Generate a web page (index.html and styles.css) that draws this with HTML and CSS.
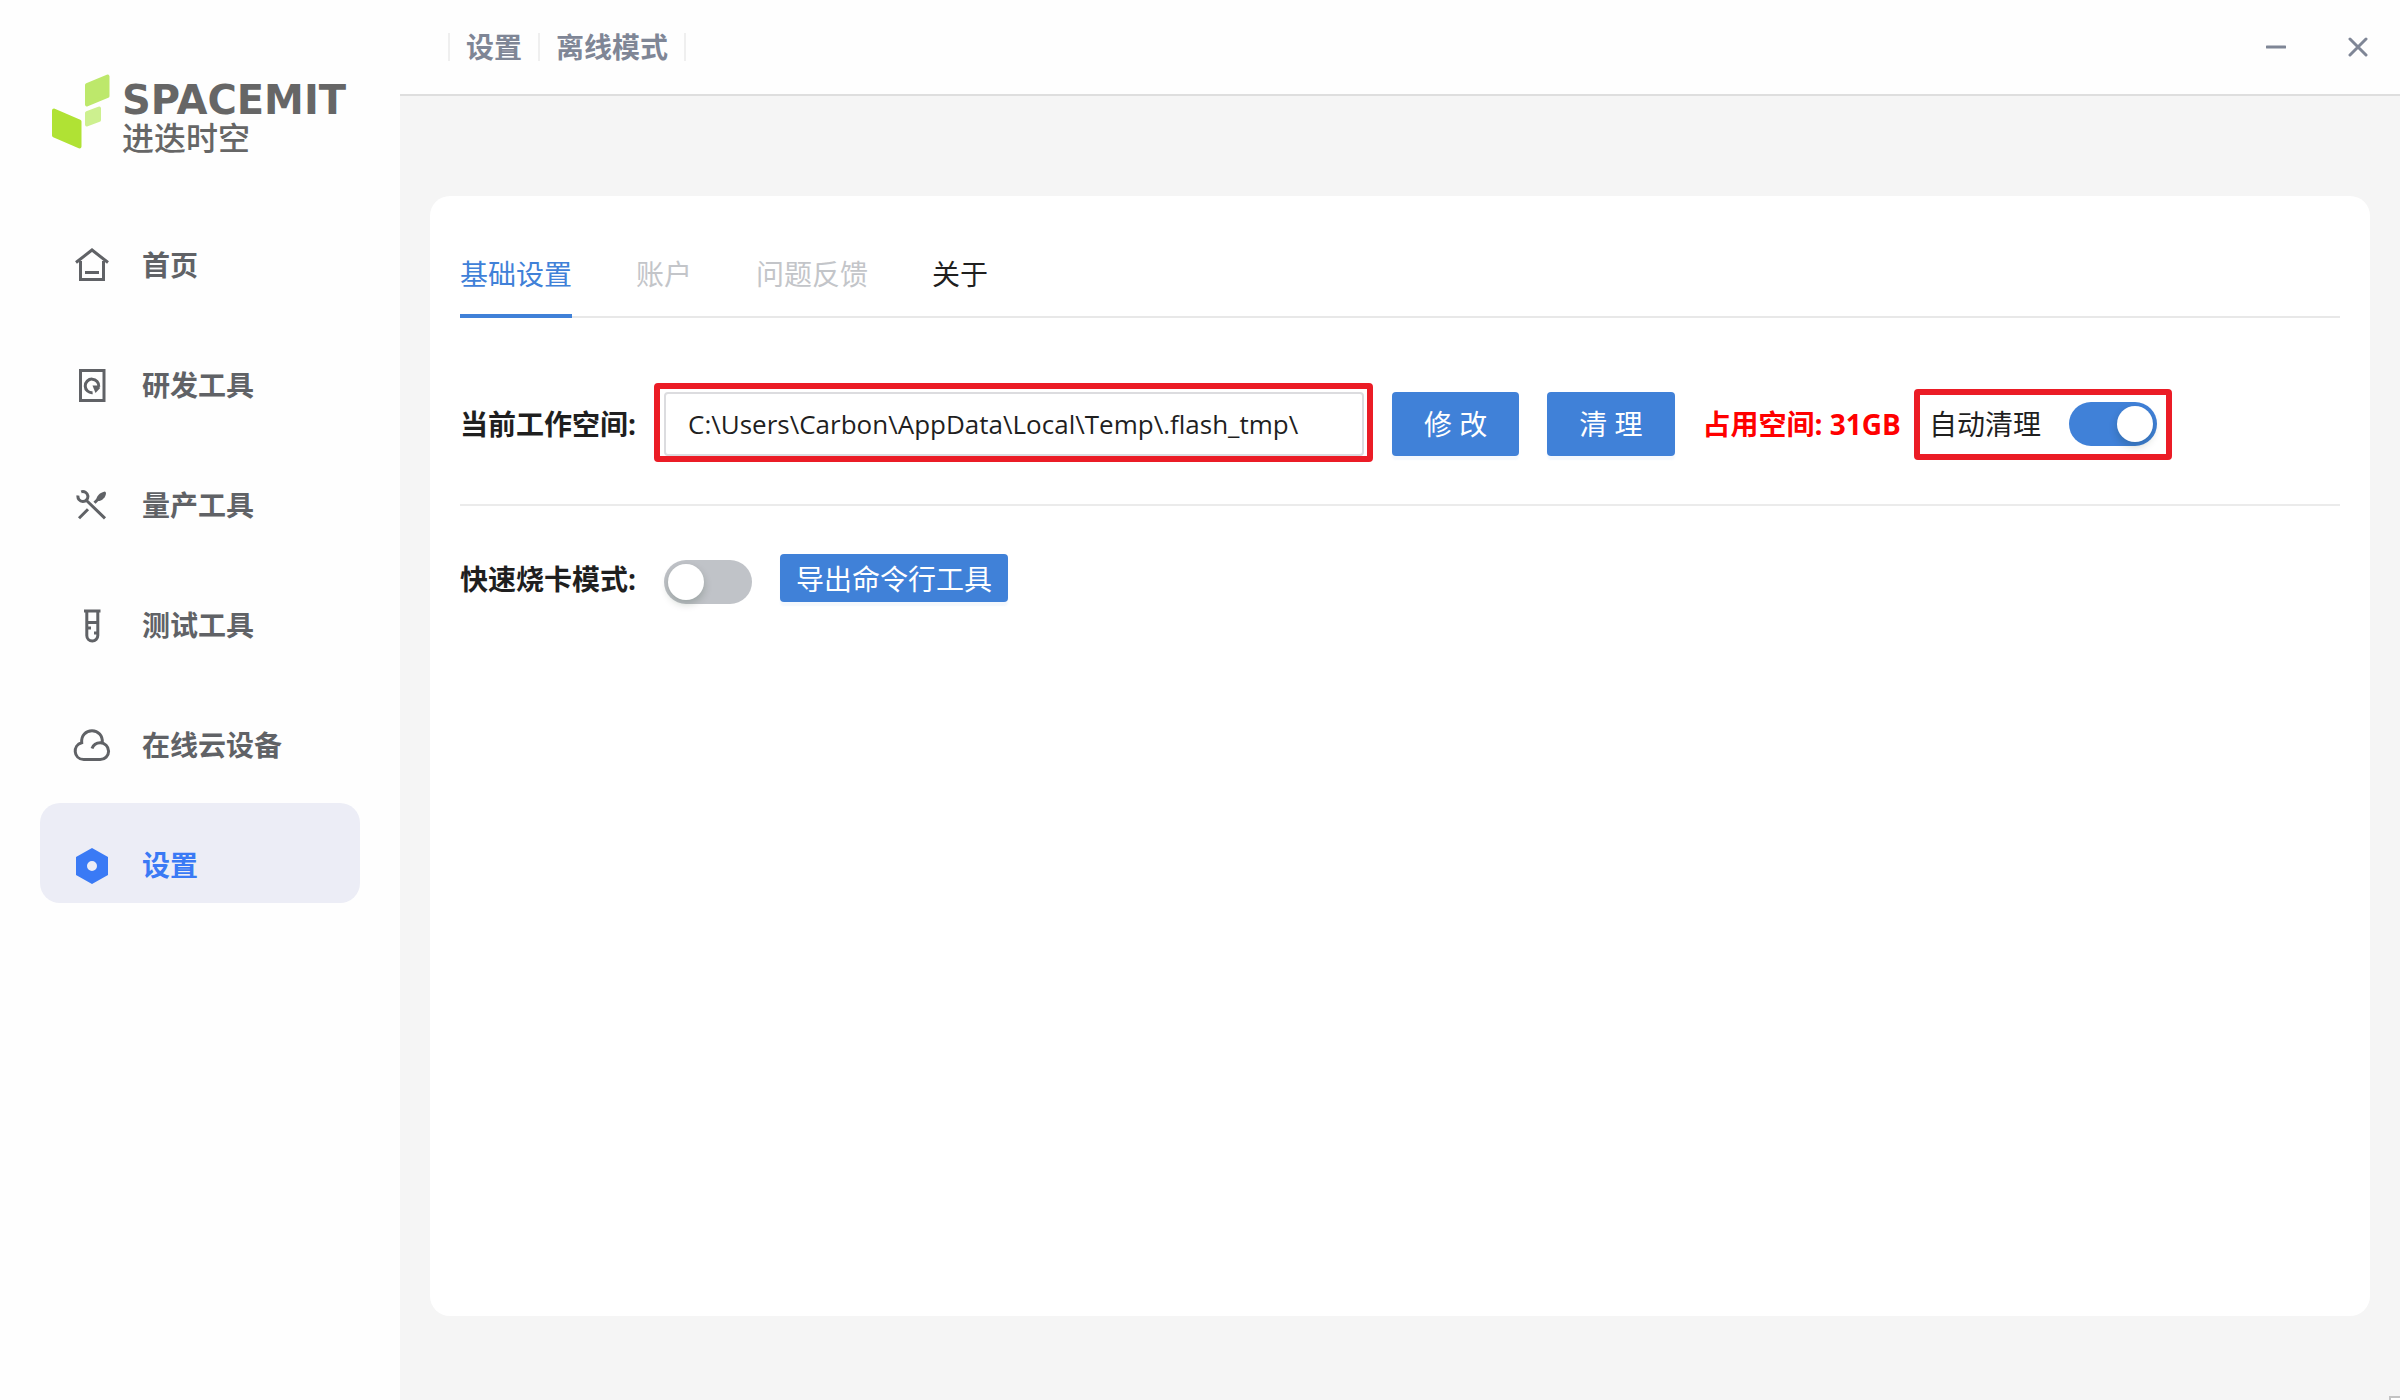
FILE: index.html
```html
<!DOCTYPE html>
<html lang="zh-CN">
<head>
<meta charset="utf-8">
<meta name="viewport" content="width=device-width, initial-scale=1">
<title>设置</title>
<link rel="stylesheet" href="styles.css">
</head>
<body>
<div class="app">
  <aside class="sidebar">
    <div class="brand">
      <svg class="brand-mark" viewBox="0 0 62 80" aria-hidden="true">
        <path d="M4 38.500 29.500 49.500V74.500L4 63.500Z" fill="#b0e234" stroke="#b0e234" stroke-width="4" stroke-linejoin="round"/>
        <path d="M37 13 57.500 4.500V24L37 32.500Z" fill="#bde86b" stroke="#bde86b" stroke-width="4" stroke-linejoin="round"/>
        <path d="M37 41 49 36.500V48L37 52.500Z" fill="#cdf08f" stroke="#cdf08f" stroke-width="4" stroke-linejoin="round"/>
      </svg>
      <div class="brand-text">
        <span class="brand-en">SPACEMIT</span>
        <span class="brand-zh">进迭时空</span>
      </div>
    </div>
    <nav class="menu">
      <a class="menu-item" href="#home">
        <svg class="icon" viewBox="0 0 36 36" aria-hidden="true"><path d="M2 15.500 18 3l16 12.500M6.500 14v18.500h23V14M11 25.500h14"/></svg>
        <span>首页</span>
      </a>
      <a class="menu-item" href="#dev">
        <svg class="icon" viewBox="0 0 36 36" aria-hidden="true"><path d="M6.500 3.500h23.500v30H6.500zM24.800 19.500A6.800 6.800 0 1 0 18.600 25.700"/><path class="solid" d="M18.500 18.500h7.200v3l-4.200 4.500z"/></svg>
        <span>研发工具</span>
      </a>
      <a class="menu-item" href="#production">
        <svg class="icon" viewBox="0 0 36 36" aria-hidden="true"><path d="M7.200 4.800A5 5 0 1 1 4 8.500M12 13 31 31.300M5 31.300l9-9"/><path d="M20.500 15.800 24 12.200"/><path class="solid" d="M22.500 13.500C22 9 26 5.500 31 4.500l1 1.200C32 10.500 27.500 14.500 23 14z"/></svg>
        <span>量产工具</span>
      </a>
      <a class="menu-item" href="#test">
        <svg class="icon" viewBox="0 0 36 36" aria-hidden="true"><path d="M10 4h16.500M12.800 4v24.500a5.500 5.500 0 0 0 11 0V4M12.800 15.500h11M13 21h4M20 26h4"/></svg>
        <span>测试工具</span>
      </a>
      <a class="menu-item" href="#cloud">
        <svg class="icon" viewBox="0 0 36 36" aria-hidden="true"><path d="M18 21.500C19.500 17.500 22.500 15.800 26.200 15.800a8.400 8.400 0 0 1 0 16.800H9.800C-1 32-1.500 18 7.700 15.700 7 8.500 12 3.800 18 3.800s11 4.700 10.300 12.200"/></svg>
        <span>在线云设备</span>
      </a>
      <a class="menu-item menu-item-active" href="#settings" aria-current="page">
        <svg class="icon" viewBox="0 0 36 36" aria-hidden="true"><path class="solid" fill-rule="evenodd" d="M18 1l16 9v18l-16 9-16-9V10zM18 14a5 5 0 1 0 0 10 5 5 0 0 0 0-10z"/></svg>
        <span>设置</span>
      </a>
    </nav>
  </aside>

  <div class="page">
    <header class="topbar">
      <div class="crumbs">
        <span class="crumb">设置</span>
        <span class="crumb">离线模式</span>
      </div>
      <div class="window-controls">
        <button class="window-button" type="button" aria-label="最小化"><svg class="window-icon" viewBox="0 0 20 20" aria-hidden="true"><path d="M1 10h18"/></svg></button>
        <button class="window-button" type="button" aria-label="关闭"><svg class="window-icon" viewBox="0 0 20 20" aria-hidden="true"><path d="M2 2l16 16M18 2 2 18"/></svg></button>
      </div>
    </header>

    <main class="content">
      <section class="card">
        <div class="tabs" role="tablist">
          <button class="tab tab-active" type="button" role="tab" aria-selected="true">基础设置</button>
          <button class="tab" type="button" role="tab" disabled>账户</button>
          <button class="tab" type="button" role="tab" disabled>问题反馈</button>
          <button class="tab" type="button" role="tab">关于</button>
        </div>

        <div class="row row-workspace">
          <label class="row-label" for="workspace">当前工作空间:</label>
          <div class="path marked">
            <input class="path-input" id="workspace" type="text" value="C:\Users\Carbon\AppData\Local\Temp\.flash_tmp\">
          </div>
          <button class="button" type="button">修 改</button>
          <button class="button" type="button">清 理</button>
          <span class="usage">占用空间: 31GB</span>
          <div class="auto-clean marked">
            <label for="auto-clean">自动清理</label>
            <input class="switch" id="auto-clean" type="checkbox" role="switch" checked>
          </div>
        </div>

        <div class="row row-quick">
          <label class="row-label" for="quick-burn">快速烧卡模式:</label>
          <input class="switch" id="quick-burn" type="checkbox" role="switch">
          <button class="button button-compact" type="button">导出命令行工具</button>
        </div>
      </section>
    </main>
  </div>
  <span class="resize-grip" aria-hidden="true"></span>
</div>
</body>
</html>
```
FILE: styles.css
```css
* {
  box-sizing: border-box;
}

body {
  margin: 0;
  font-family: "Open Sans", "Noto Sans CJK SC", sans-serif;
  font-size: 28px;
  line-height: 44px;
  color: #1f1f1f;
  background: #f5f5f5;
}

button,
input {
  margin: 0;
  font: inherit;
  color: inherit;
}

button {
  cursor: pointer;
}

.app {
  position: relative;
  display: flex;
  min-height: 100vh;
}

/* Sidebar */

.sidebar {
  flex: none;
  width: 400px;
  padding: 72px 40px 40px;
  background: #fefefe;
}

.brand {
  display: flex;
  gap: 10px;
  padding-left: 10px;
}

.brand-mark {
  flex: none;
  width: 62px;
  height: 80px;
}

.brand-text {
  display: flex;
  flex-direction: column;
  padding-top: 10px;
  color: #666;
  white-space: nowrap;
}

.brand-en {
  font: bold 40px/36px "DejaVu Sans", sans-serif;
}

.brand-zh {
  font-family: "Noto Sans CJK SC", sans-serif;
  font-size: 32px;
  font-weight: 500;
  line-height: 36px;
}

.menu {
  display: flex;
  flex-direction: column;
  gap: 20px;
  margin-top: 49px;
}

.menu-item {
  display: flex;
  align-items: center;
  gap: 32px;
  height: 100px;
  padding: 24px 34px 0;
  border-radius: 20px;
  color: #606266;
  font-weight: bold;
  text-decoration: none;
  white-space: nowrap;
}

.menu-item-active {
  background: #ecedf6;
  color: #3a7af5;
}

.icon {
  flex: none;
  width: 36px;
  height: 36px;
  overflow: visible;
  fill: none;
  stroke: currentColor;
  stroke-width: 3;
}

.icon .solid {
  fill: currentColor;
  stroke: none;
}

/* Top bar */

.page {
  flex: 1;
  min-width: 0;
  display: flex;
  flex-direction: column;
}

.topbar {
  display: flex;
  align-items: center;
  justify-content: space-between;
  height: 96px;
  padding: 0 26px 0 48px;
  border-bottom: 2px solid #dedede;
  background: #fefefe;
}

.crumbs {
  display: flex;
  color: #7f8696;
  font-weight: bold;
  line-height: 28px;
}

.crumb {
  padding: 0 16px;
  border-left: 2px solid #efefef;
}

.crumb:last-child {
  border-right: 2px solid #efefef;
}

.window-controls {
  display: flex;
  gap: 50px;
}

.window-button {
  display: flex;
  padding: 6px;
  border: 0;
  background: none;
  color: #7f8696;
}

.window-icon {
  width: 20px;
  height: 20px;
  fill: none;
  stroke: currentColor;
  stroke-width: 3;
  stroke-linecap: round;
}

/* Settings card */

.content {
  flex: 1;
  display: flex;
  padding: 100px 30px 84px;
}

.card {
  flex: 1;
  min-width: 0;
  padding: 56px 30px;
  border-radius: 20px;
  background: #fff;
}

.tabs {
  display: flex;
  gap: 64px;
  border-bottom: 2px solid #e8e8e8;
}

.tab {
  margin-bottom: -2px;
  padding: 0 0 18px;
  border: 0;
  border-bottom: 4px solid transparent;
  background: none;
  line-height: 44px;
}

.tab:disabled {
  color: #c3c5c9;
  cursor: not-allowed;
}

.tab-active {
  border-color: #4081d8;
  color: #4081d8;
}

.row {
  display: flex;
  gap: 28px;
  white-space: nowrap;
}

.row-workspace {
  align-items: center;
  padding: 74px 0 48px;
  border-bottom: 2px solid #ebebeb;
}

.row-quick {
  padding: 48px 0;
  line-height: 50px;
}

.row-label {
  flex: none;
  width: 176px;
  font-weight: bold;
}

.path {
  flex: 0 1 700px;
  min-width: 0;
}

.path-input {
  display: block;
  width: 100%;
  height: 64px;
  padding: 0 22px;
  border: 2px solid #dcdcdf;
  border-radius: 4px;
  background: #fff;
  font-size: 26px;
}

.button {
  flex: none;
  height: 64px;
  padding: 0 32px;
  border: 0;
  border-radius: 4px;
  background: #4081d8;
  box-shadow: 0 4px 2px rgba(64, 129, 216, 0.06);
  color: #fff;
}

.button-compact {
  height: 48px;
  padding: 0 16px;
}

.usage {
  min-width: 196px;
  color: #f00;
  font-weight: bold;
}

.auto-clean {
  display: flex;
  align-items: center;
  gap: 28px;
  height: 64px;
}

/* Red highlight frames drawn over the controls */

.marked {
  position: relative;
}

.marked::after {
  content: "";
  position: absolute;
  inset: -9px -9px -6px -10px;
  border: 6px solid #eb1c26;
  border-radius: 4px;
  pointer-events: none;
}

.auto-clean::after {
  inset: -3px -15px -4px;
}

.switch {
  appearance: none;
  flex: none;
  width: 88px;
  height: 44px;
  padding: 4px;
  border-radius: 22px;
  background: #c0c3c8;
  cursor: pointer;
}

.switch::before {
  content: "";
  display: block;
  width: 36px;
  height: 36px;
  border-radius: 50%;
  background: #fff;
  box-shadow: 0 4px 8px rgba(0, 35, 11, 0.2);
}

.switch:checked {
  background: #4081d8;
}

.switch:checked::before {
  margin-left: auto;
}

.row-quick .switch {
  align-self: flex-end;
}

.resize-grip {
  position: absolute;
  right: 0;
  bottom: 0;
  width: 11px;
  height: 4px;
  border: solid #c4c4c4;
  border-width: 2px 0 0 2px;
  background: #fff;
}
```
